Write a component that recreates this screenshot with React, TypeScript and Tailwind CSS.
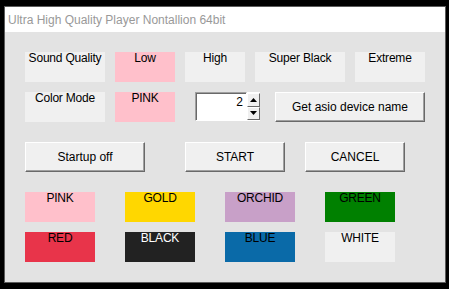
const LABEL_ROW = [
  { text: "Sound Quality", w: "w-[80px]", bg: "bg-[#f0f0f0]" },
  { text: "Low", w: "w-[60px]", bg: "bg-[#ffc0cb]" },
  { text: "High", w: "w-[60px]", bg: "bg-[#f0f0f0]" },
  { text: "Super Black", w: "w-[90px]", bg: "bg-[#f0f0f0]" },
  { text: "Extreme", w: "w-[70px]", bg: "bg-[#f0f0f0]" },
];

const COLORS_TOP = [
  { name: "PINK", bg: "bg-[#ffc0cb]", fg: "text-black" },
  { name: "GOLD", bg: "bg-[#ffd700]", fg: "text-black" },
  { name: "ORCHID", bg: "bg-[#c8a0c8]", fg: "text-black" },
  { name: "GREEN", bg: "bg-[#008000]", fg: "text-black" },
];

const COLORS_BOTTOM = [
  { name: "RED", bg: "bg-[#e8344a]", fg: "text-black" },
  { name: "BLACK", bg: "bg-[#222222]", fg: "text-white" },
  { name: "BLUE", bg: "bg-[#0a6aa8]", fg: "text-black" },
  { name: "WHITE", bg: "bg-[#f0f0f0]", fg: "text-black" },
];

function Label({ text, w, bg, fg = "text-black" }: { text: string; w: string; bg: string; fg?: string }) {
  return (
    <div className={`${w} h-[30px] ${bg} ${fg} text-center text-[12px] leading-[12px] tracking-[-0.2px]`}>
      {text}
    </div>
  );
}

function Button({ children, w }: { children: string; w: string }) {
  return (
    <div
      className={`${w} h-[30px] flex items-center justify-center bg-[#f0f0f0] border border-t-white border-l-white border-b-[#696969] border-r-[#696969] shadow-[inset_-1px_-1px_0_#a0a0a0] text-[12px] text-black`}
    >
      {children}
    </div>
  );
}

function SpinBox({ value }: { value: number }) {
  return (
    <div className="flex h-[30px] w-[65px]">
      <div className="w-[52px] h-[29px] bg-white border border-t-[#a0a0a0] border-l-[#a0a0a0] border-b-white border-r-white shadow-[inset_1px_1px_0_#696969] text-right pr-[3px] text-[12px] leading-[14px] pt-[2px]">
        {value}
      </div>
      <div className="flex flex-col w-[13px] h-[29px] bg-white py-px">
        <div className="flex-1 flex items-center justify-center bg-[#f0f0f0] border border-t-white border-l-white border-b-[#696969] border-r-[#696969]">
          <svg width="7" height="4" viewBox="0 0 7 4">
            <path d="M3.5 0 L7 4 L0 4 Z" fill="#000" />
          </svg>
        </div>
        <div className="flex-1 flex items-center justify-center bg-[#f0f0f0] border border-t-white border-l-white border-b-[#696969] border-r-[#696969]">
          <svg width="7" height="4" viewBox="0 0 7 4">
            <path d="M0 0 L7 0 L3.5 4 Z" fill="#000" />
          </svg>
        </div>
      </div>
    </div>
  );
}

export default function App() {
  return (
    <div
      className="w-[449px] h-[289px] bg-black pt-[6px] pl-[4px] pr-[3px] pb-[6px]"
      style={{ fontFamily: '"Liberation Sans", Arial, sans-serif' }}
    >
      <div className="h-full flex flex-col border border-[#5c5c5c] bg-[#e3e3e3]">
        <div className="h-[25px] bg-white flex items-center pl-[3px] text-[12px] text-[#999999]">
          Ultra High Quality Player Nontallion 64bit
        </div>
        <div className="flex flex-col pl-[20px] pt-[20px]">
          <div className="flex gap-[10px]">
            {LABEL_ROW.map((l) => (
              <Label key={l.text} text={l.text} w={l.w} bg={l.bg} />
            ))}
          </div>

          <div className="flex mt-[10px] items-start">
            <Label text="Color Mode" w="w-[80px]" bg="bg-[#f0f0f0]" />
            <div className="ml-[10px]">
              <Label text="PINK" w="w-[60px]" bg="bg-[#ffc0cb]" />
            </div>
            <div className="ml-[20px]">
              <SpinBox value={2} />
            </div>
            <div className="ml-[15px]">
              <Button w="w-[150px]">Get asio device name</Button>
            </div>
          </div>

          <div className="flex mt-[20px]">
            <Button w="w-[120px]">Startup off</Button>
            <div className="ml-[40px]">
              <Button w="w-[100px]">START</Button>
            </div>
            <div className="ml-[20px]">
              <Button w="w-[100px]">CANCEL</Button>
            </div>
          </div>

          <div className="flex gap-[30px] mt-[20px]">
            {COLORS_TOP.map((c) => (
              <Label key={c.name} text={c.name} w="w-[70px]" bg={c.bg} fg={c.fg} />
            ))}
          </div>
          <div className="flex gap-[30px] mt-[10px]">
            {COLORS_BOTTOM.map((c) => (
              <Label key={c.name} text={c.name} w="w-[70px]" bg={c.bg} fg={c.fg} />
            ))}
          </div>
        </div>
      </div>
    </div>
  );
}
